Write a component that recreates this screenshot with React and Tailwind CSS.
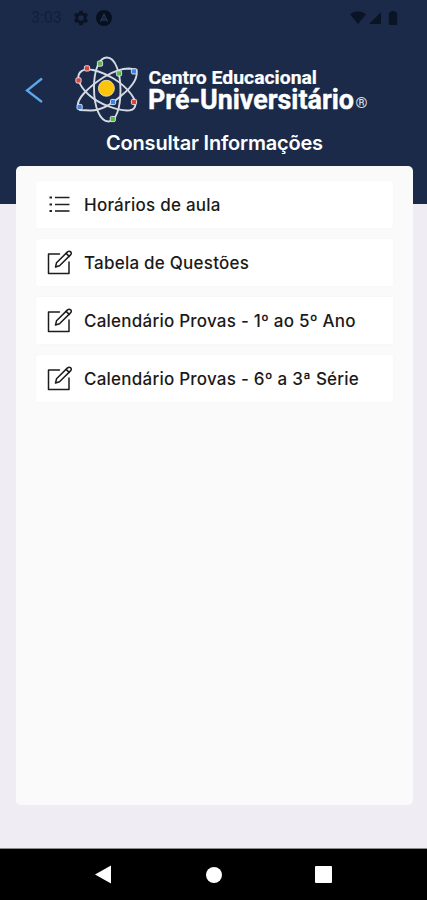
function AtomLogo() {
  const dots = [
    { x: 87, y: 68.4, fill: '#e2403b' },
    { x: 78.5, y: 80.4, fill: '#e2403b' },
    { x: 134, y: 102, fill: '#e2403b' },
    { x: 100, y: 63.6, fill: '#58b947' },
    { x: 119, y: 73.4, fill: '#58b947' },
    { x: 112.8, y: 119, fill: '#58b947' },
    { x: 134, y: 71.4, fill: '#3b86e0' },
    { x: 79.6, y: 107, fill: '#3b86e0' },
    { x: 113, y: 102, fill: '#3b86e0' },
  ];

  return (
    <svg viewBox="72 54 300 72" className="h-[72px] w-[300px] shrink-0">
      {/* Orbits */}
      <g fill="none" stroke="#d5dae5" strokeWidth="1.9">
        <path d="M107 57.5C115 57.5 120.5 72 120.5 90C120.5 108 116 121.5 108.5 121.5C100 121.5 94 107 94 88C94 70 99 57.5 107 57.5Z" />
        <path d="M78.5 108C74 99 93 84 104 77C114 71 121 68.5 129 68.5L136.5 69.5C138.500 78 133 86 122 95C112 104 101 110.500 91 110.500L80 110Z" />
        <path d="M78.5 80C77 71 84 68 93 70C107 73.5 122 82 131 94C137 102 137 109 130 110.3C118 111.5 99 104 89 95Q81 88 78.5 80Z" />
      </g>
      <circle cx="106.4" cy="88.3" r="8" fill="#fdc40c" stroke="#f4e7bd" strokeWidth="0.8" />
      {dots.map((dot) => (
        <rect
          key={`${dot.x}-${dot.y}`}
          x={dot.x - 2.6}
          y={dot.y - 2.6}
          width="5.2"
          height="5.2"
          rx="1.3"
          fill={dot.fill}
          stroke="#e8ebf2"
          strokeWidth="0.9"
        />
      ))}

      {/* Name */}
      <g fill="#fff" stroke="#fff" strokeLinejoin="round" fontFamily="Roboto, sans-serif" fontWeight="700">
        <text x="148.5" y="84" fontSize="18.5" strokeWidth="0.2" textLength="168.5" lengthAdjust="spacingAndGlyphs">
          Centro Educacional
        </text>
        <text x="148" y="108.8" fontSize="26.8" strokeWidth="0.4" textLength="206" lengthAdjust="spacingAndGlyphs">
          Pré-Universitário
        </text>
      </g>
      <text x="355.5" y="108" fontSize="15.5" fill="#dfe3ec" fontFamily="Roboto, sans-serif" textLength="12" lengthAdjust="spacingAndGlyphs">
        ®
      </text>
    </svg>
  );
}

function ListIcon() {
  return (
    <svg viewBox="0 0 26 26" className="h-[26px] w-[26px]" fill="none" stroke="#222">
      <path d="M8 5.5H22.5M8 12.5H22.5" strokeWidth="1.6" />
      <path d="M8 19H22.5" strokeWidth="1.6" />
      <path d="M2.5 5.5H5M2.5 12.5H5M2.5 19H5" strokeWidth="2.2" />
    </svg>
  );
}

function EditIcon() {
  return (
    <svg
      viewBox="0 0 26 26"
      className="h-[26px] w-[26px]"
      fill="none"
      stroke="#1c1c1c"
      strokeWidth="1.5"
      strokeLinejoin="round"
      strokeLinecap="round"
    >
      <path d="M12.5 4H1.5V23.5H22V12" />
      <path d="M8.5 17L9.5 12.8L20.5 1.9Q22.2 .6 23.8 1.9Q25 3.3 23.5 4.9L12.5 15.7Z" />
      <path d="M19.1 3.4L22.2 6.4" />
    </svg>
  );
}

const items = [
  { label: 'Horários de aula', icon: ListIcon },
  { label: 'Tabela de Questões', icon: EditIcon },
  { label: 'Calendário Provas - 1º ao 5º Ano', icon: EditIcon },
  { label: 'Calendário Provas - 6º a 3ª Série', icon: EditIcon },
];

function StatusBar() {
  return (
    <div className="flex h-9 items-center justify-between pl-[31px] pr-[29px] text-[#0b1424]">
      <div className="flex items-center">
        <span className="w-[42px] font-[Roboto,sans-serif] text-[16px] leading-none text-[#10203a]">3:03</span>
        <svg viewBox="0 0 24 24" className="h-4 w-4" fill="currentColor">
          <path
            fillRule="evenodd"
            d="M9.5 1h5l.6 3 2 1.2 3-1 2.4 4.2-2.3 2v2.8l2.3 2-2.4 4.3-3-1-2 1.2-.6 3h-5l-.6-3-2-1.2-3 1-2.4-4.3 2.3-2v-2.8l-2.3-2 2.4-4.2 3 1 2-1.2zM12 8a4 4 0 1 0 0 8 4 4 0 0 0 0-8z"
          />
        </svg>
        <svg viewBox="0 0 16 16" className="ml-[7px] h-4 w-4">
          <circle cx="8" cy="8" r="8" fill="#07101f" />
          <path d="M4.5 11.5L8 4.5L11.5 11.5M6.5 11L8 8.5L9.5 11" fill="none" stroke="#253653" strokeWidth="1.3" />
        </svg>
      </div>
      <svg viewBox="0 0 48 16" className="h-4 w-12" fill="currentColor">
        <path d="M0 4.2Q8 -1.5 16 4.2L8 14Z" />
        <path d="M31 2V14H19Z" />
        <path d="M41 1h4v1.3h1.2q1 0 1 1V14q0 1-1 1h-6.4q-1 0-1-1V3.3q0-1 1-1H41z" />
      </svg>
    </div>
  );
}

function NavBar() {
  return (
    <nav className="flex h-[51px] items-center bg-black pl-[94px] text-white">
      <svg viewBox="0 0 18 20" className="h-5 w-[18px]" fill="currentColor">
        <path d="M1 9.5L17 .5V18.5Z" />
      </svg>
      <div className="ml-[94px] h-4 w-4 rounded-full bg-white" />
      <div className="ml-[93px] h-[17px] w-[17px] rounded-[1px] bg-white" />
    </nav>
  );
}

export default function App() {
  return (
    <div className="flex h-[900px] w-[427px] flex-col overflow-hidden bg-[#efedf3] font-[Inter,sans-serif]">
      {/* Header */}
      <header className="h-[204px] shrink-0 bg-[#1b2a49]">
        <StatusBar />
        <div className="flex h-[90px] items-center pl-[25px]">
          <button aria-label="Voltar" className="mt-[18px] h-[26px] w-[19px]">
            <svg viewBox="0 0 19 26" className="h-[26px] w-[19px]" fill="none" stroke="#5ea6ea" strokeWidth="2.3">
              <path d="M17 1.5L2 13.5L17 25" />
            </svg>
          </button>
          <div className="ml-7 mt-[18px]">
            <AtomLogo />
          </div>
        </div>
        <h1 className="mt-1 pl-[2px] text-center text-[20px] font-semibold leading-[26px] tracking-[-0.2px] text-white">
          Consultar Informações
        </h1>
      </header>

      {/* Options card */}
      <main className="z-10 ml-4 -mt-[38px] h-[639px] w-[397px] shrink-0 rounded-[5px] bg-[#fafafa] px-5 pt-[15px]">
        <ul className="flex flex-col gap-[11px]">
          {items.map(({ label, icon: Icon }) => (
            <li
              key={label}
              className="flex h-[47px] items-center rounded-[2px] bg-white pl-[11px] shadow-[0_0_2px_rgba(0,0,0,0.04)]"
            >
              <Icon />
              <span className="ml-[11px] whitespace-nowrap text-[17px] font-medium leading-6 tracking-[0.23px] text-[#1a1a1a]">
                {label}
              </span>
            </li>
          ))}
        </ul>
      </main>

      <div className="mt-auto border-t border-[#8b8a8e]">
        <NavBar />
      </div>
    </div>
  );
}
